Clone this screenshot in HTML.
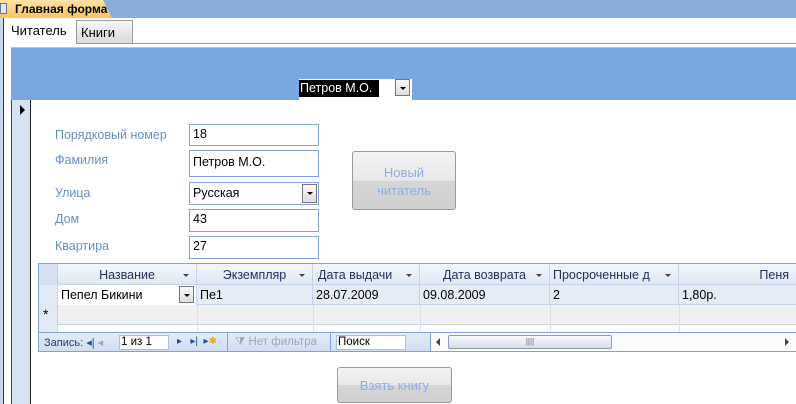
<!DOCTYPE html>
<html><head><meta charset="utf-8"><style>
*{margin:0;padding:0;box-sizing:border-box}
body{width:796px;height:404px;overflow:hidden;background:#fff;position:relative;font-family:"Liberation Sans","Noto Sans CJK SC",sans-serif;font-size:12px;color:#000}
.a{position:absolute}
.lbl{position:absolute;color:#6a8cc8;font-size:12.5px}
.inp{position:absolute;border:1px solid #7da2dc;background:#fff;font-size:12.5px;padding:2px 0 0 3px}
.dd{position:absolute;width:15px;height:17px;border:1px solid #777;background:linear-gradient(#fafafa,#ddd)}
.dd:after{content:"";position:absolute;left:4px;top:7px;border-left:3px solid transparent;border-right:3px solid transparent;border-top:3px solid #000}
.btn{position:absolute;border:1px solid #9a9a9a;border-radius:3px;background:linear-gradient(#f3f3f3 0%,#e8e8e8 50%,#d6d6d6 51%,#cfcfcf 100%);color:#8eaee0;font-size:13px;text-align:center}
.hc{position:absolute;top:0;height:21px;border-right:1px solid #c6d4ea;padding-top:4px;color:#1f2f55;font-size:12.5px;text-align:center}
.hc:after{content:"";position:absolute;right:7px;top:10px;border-left:3px solid transparent;border-right:3px solid transparent;border-top:3px solid #444}
.hc.na:after{display:none}
.c{position:absolute;height:20px;border-right:1px solid #c6d4ea;padding:3px 0 0 3px;font-size:12.5px}
</style></head><body>
<div class="a" style="left:0;top:0;width:796px;height:18px;background:#8badd9"></div>
<div class="a" style="left:0;top:0;width:112px;height:18px;background:linear-gradient(#fde3a8,#f9c45e);clip-path:polygon(0 0,103px 0,112px 18px,0 18px)"></div>
<div class="a" style="left:0;top:3px;width:7px;height:11px;background:#e8e8f4;border:1px solid #6677aa"></div>
<div class="a" style="left:15px;top:2px;font-weight:bold;font-size:12px">Главная форма</div>
<div class="a" style="left:0;top:18px;width:3px;height:386px;background:#c8d8ee"></div>
<div class="a" style="left:3px;top:18px;width:1px;height:386px;background:#333"></div>
<div class="a" style="left:11px;top:23px;font-size:13px">Читатель</div>
<div class="a" style="left:76px;top:20px;width:57px;height:24px;border:1px solid #999;background:linear-gradient(#f7f7f7,#d9d9d9)"></div>
<div class="a" style="left:81px;top:25px;font-size:13px">Книги</div>
<div class="a" style="left:133px;top:43px;width:663px;height:1px;background:#999"></div>
<div class="a" style="left:11px;top:47px;width:785px;height:1px;background:#b8c4d4"></div>
<div class="a" style="left:11px;top:48px;width:785px;height:52px;background:#7aa7e1"></div>
<div class="a" style="left:299px;top:79px;width:113px;height:21px;background:#fff"></div>
<div class="a" style="left:299px;top:80px;width:80px;height:17px;background:#000;color:#fff;font-size:12.5px;padding:1px 0 0 1px">Петров М.О.</div>
<div class="dd" style="left:395px;top:79px"></div>
<div class="a" style="left:11px;top:100px;width:1px;height:304px;background:#444"></div>
<div class="a" style="left:12px;top:100px;width:18px;height:304px;background:#d5e3f3"></div>
<div class="a" style="left:30px;top:100px;width:1px;height:304px;background:#222"></div>
<div class="a" style="left:20px;top:105px;border-top:5px solid transparent;border-bottom:5px solid transparent;border-left:5px solid #000"></div>
<div class="lbl" style="left:55px;top:128px">Порядковый номер</div>
<div class="inp" style="left:189px;top:124px;width:130px;height:22px">18</div>
<div class="lbl" style="left:55px;top:153px">Фамилия</div>
<div class="inp" style="left:189px;top:150px;width:130px;height:27px;padding-top:4px">Петров М.О.</div>
<div class="lbl" style="left:55px;top:186px">Улица</div>
<div class="inp" style="left:189px;top:182px;width:130px;height:23px;padding-top:3px">Русская</div>
<div class="dd" style="left:302px;top:184px;height:19px"></div>
<div class="lbl" style="left:55px;top:212px">Дом</div>
<div class="inp" style="left:189px;top:209px;width:130px;height:23px">43</div>
<div class="lbl" style="left:55px;top:239px">Квартира</div>
<div class="inp" style="left:189px;top:236px;width:130px;height:23px">27</div>
<div class="btn" style="left:352px;top:151px;width:104px;height:59px;padding-top:12px;line-height:18px">Новый<br>читатель</div>
<div class="a" style="left:38px;top:263px;width:758px;height:89px;border:1px solid #7da2dc;border-right:none;background:#fff;overflow:hidden">
 <div class="a" style="left:0;top:0;width:758px;height:21px;background:linear-gradient(#f4f7fc,#dfe7f3);border-bottom:1px solid #c6d4ea"></div>
 <div class="a" style="left:0;top:0;width:19px;height:21px;background:#d5e1f1;border-right:1px solid #c6d4ea"></div>
 <div class="hc" style="left:19px;width:139px">Название</div>
 <div class="hc" style="left:158px;width:116px">Экземпляр</div>
 <div class="hc" style="left:274px;width:107px;text-align:left;padding-left:5px">Дата выдачи</div>
 <div class="hc" style="left:381px;width:130px">Дата возврата</div>
 <div class="hc" style="left:511px;width:129px;text-align:left;padding-left:3px">Просроченные д</div>
 <div class="hc na" style="left:640px;width:118px;text-align:right;padding-right:8px;border:none">Пеня</div>
 <div class="a" style="left:0;top:21px;width:758px;height:20px;background:#e6ecf6;border-bottom:1px solid #c6d4ea"></div>
 <div class="a" style="left:0;top:21px;width:19px;height:60px;background:#e2eaf5;border-right:1px solid #c6d4ea"></div>
 <div class="c" style="left:19px;top:21px;width:139px;background:#fff">Пепел Бикини</div>
 <div class="dd" style="left:140px;top:22px"></div>
 <div class="c" style="left:158px;top:21px;width:116px">Пе1</div>
 <div class="c" style="left:274px;top:21px;width:107px">28.07.2009</div>
 <div class="c" style="left:381px;top:21px;width:130px">09.08.2009</div>
 <div class="c" style="left:511px;top:21px;width:129px">2</div>
 <div class="c" style="left:640px;top:21px;width:118px;border:none">1,80р.</div>
 <div class="a" style="left:19px;top:41px;width:739px;height:20px;background:#f0f0f0;border-bottom:1px solid #c6d4ea"></div>
 <div class="a" style="left:4px;top:42px;font-size:14px">*</div>
 <div class="a" style="left:158px;top:41px;width:1px;height:27px;background:#d6e0ee"></div>
 <div class="a" style="left:274px;top:41px;width:1px;height:27px;background:#d6e0ee"></div>
 <div class="a" style="left:381px;top:41px;width:1px;height:27px;background:#d6e0ee"></div>
 <div class="a" style="left:511px;top:41px;width:1px;height:27px;background:#d6e0ee"></div>
 <div class="a" style="left:640px;top:41px;width:1px;height:27px;background:#d6e0ee"></div>
 <div class="a" style="left:0;top:68px;width:758px;height:20px;background:linear-gradient(#e4ecf7,#cfddf1);border-top:1px solid #7da2dc"></div>
 <div class="a" style="left:5px;top:72px;color:#1c3d7a;font-size:11px">Запись: <span style="color:#1c4fa0">◂|</span> <span style="color:#9ab">◂</span></div>
 <div class="a" style="left:80px;top:71px;width:50px;height:15px;background:#fff;border:1px solid #aac0e0;font-size:11.5px;padding-left:1px">1 из 1</div>
 <div class="a" style="left:138px;top:72px;color:#1c4fa0;font-size:10px">▸ &nbsp; ▸| &nbsp;▸<span style="color:#e8b000">✱</span></div>
 <div class="a" style="left:188px;top:69px;width:1px;height:19px;background:#7da2dc"></div>
 <div class="a" style="left:196px;top:72px;color:#9aa8b8;font-size:11.5px">⧩ Нет фильтра</div>
 <div class="a" style="left:291px;top:69px;width:1px;height:19px;background:#7da2dc"></div>
 <div class="a" style="left:297px;top:71px;width:70px;height:15px;background:#fff;border:1px solid #aac0e0;font-size:11.5px;padding-left:1px">Поиск</div>
 <div class="a" style="left:391px;top:69px;width:1px;height:19px;background:#7da2dc"></div>
 <div class="a" style="left:392px;top:69px;width:366px;height:19px;background:#fafbfd"></div>
 <div class="a" style="left:397px;top:74px;border-top:4px solid transparent;border-bottom:4px solid transparent;border-right:4px solid #444"></div>
 <div class="a" style="left:409px;top:71px;width:164px;height:14px;border:1px solid #8a9ab8;border-radius:2px;background:linear-gradient(#f8f9fb,#d8dde6);text-align:center;font-size:8px;color:#666;line-height:12px">||||</div>
 <div class="a" style="left:746px;top:74px;border-top:4px solid transparent;border-bottom:4px solid transparent;border-left:4px solid #444"></div>
</div>
<div class="btn" style="left:337px;top:367px;width:115px;height:36px;padding-top:10px">Взять книгу</div>
</body></html>
